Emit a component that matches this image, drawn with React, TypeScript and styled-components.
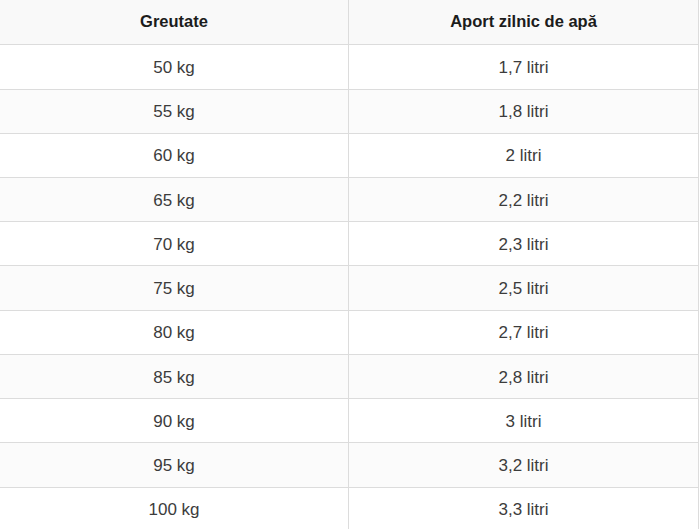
import React from 'react';
import styled, { createGlobalStyle } from 'styled-components';

const GlobalStyle = createGlobalStyle`
  html, body {
    margin: 0;
    padding: 0;
    background: #ffffff;
  }
  body {
    font-family: "Liberation Sans", Arial, sans-serif;
  }
`;

const Table = styled.table`
  width: 699px;
  table-layout: fixed;
  border-collapse: separate;
  border-spacing: 0;
  font-size: 17px;
`;

const HeadCell = styled.th<{ $width: number }>`
  width: ${(p) => p.$width}px;
  box-sizing: border-box;
  height: 45.3px;
  padding: 0 0 1px;
  background: #f9f9f9;
  color: #1c1c1c;
  font-weight: 700;
  font-size: 16.5px;
  text-align: center;
  vertical-align: middle;
  border-right: 1px solid #dcdcdc;
  border-bottom: 1px solid #dcdcdc;
`;

const Row = styled.tr<{ $striped: boolean }>`
  background: ${(p) => (p.$striped ? '#fbfbfb' : '#ffffff')};
`;

const Cell = styled.td`
  box-sizing: border-box;
  height: 44.24px;
  padding: 2px 0 0;
  color: #3c3c3c;
  text-align: center;
  vertical-align: middle;
  border-right: 1px solid #dcdcdc;
  border-bottom: 1px solid #dcdcdc;
`;

const rows: [string, string][] = [
  ['50 kg', '1,7 litri'],
  ['55 kg', '1,8 litri'],
  ['60 kg', '2 litri'],
  ['65 kg', '2,2 litri'],
  ['70 kg', '2,3 litri'],
  ['75 kg', '2,5 litri'],
  ['80 kg', '2,7 litri'],
  ['85 kg', '2,8 litri'],
  ['90 kg', '3 litri'],
  ['95 kg', '3,2 litri'],
  ['100 kg', '3,3 litri'],
];

const App = () => (
  <>
    <GlobalStyle />
    <Table>
      <thead>
        <tr>
          <HeadCell $width={349}>Greutate</HeadCell>
          <HeadCell $width={350}>Aport zilnic de apă</HeadCell>
        </tr>
      </thead>
      <tbody>
        {rows.map(([weight, water], i) => (
          <Row key={weight} $striped={i % 2 === 1}>
            <Cell>{weight}</Cell>
            <Cell>{water}</Cell>
          </Row>
        ))}
      </tbody>
    </Table>
  </>
);

export default App;
